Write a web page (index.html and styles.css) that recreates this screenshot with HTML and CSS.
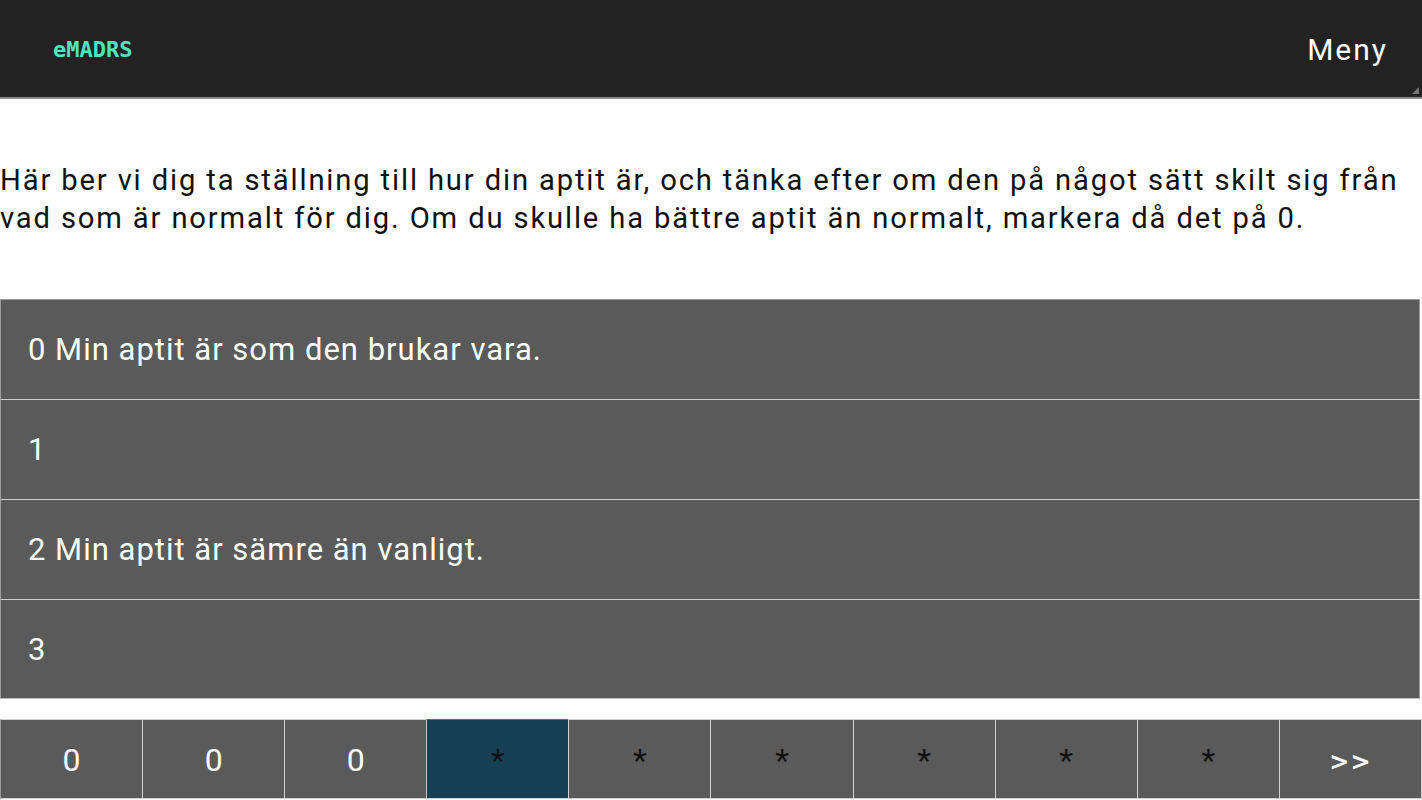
FILE: index.html
```html
<!DOCTYPE html>
<html lang="sv">
<head>
<meta charset="utf-8">
<title>eMADRS</title>
<link rel="stylesheet" href="styles.css">
</head>
<body>
<header class="topbar">
  <div class="logo">eMADRS</div>
  <div class="menu">Meny</div>
  <span class="grip"></span>
</header>
<main class="content">
  <p class="question">Här ber vi dig ta ställning till hur din aptit är, och tänka efter om den på något sätt skilt sig från vad som är normalt för dig. Om du skulle ha bättre aptit än normalt, markera då det på 0.</p>
  <div class="options">
    <div class="option">0 Min aptit är som den brukar vara.</div>
    <div class="option">1</div>
    <div class="option">2 Min aptit är sämre än vanligt.</div>
    <div class="option">3</div>
  </div>
</main>
<nav class="steps">
  <div class="step done">0</div>
  <div class="step done">0</div>
  <div class="step done">0</div>
  <div class="step current">*</div>
  <div class="step">*</div>
  <div class="step">*</div>
  <div class="step">*</div>
  <div class="step">*</div>
  <div class="step">*</div>
  <div class="step next">&gt;&gt;</div>
</nav>
</body>
</html>
```
FILE: styles.css
```css
html, body {
  margin: 0;
  padding: 0;
  background: #ffffff;
  font-family: Roboto, "Liberation Sans", sans-serif;
  width: 1422px;
  height: 800px;
  overflow: hidden;
}
.topbar {
  position: relative;
  height: 97px;
  background: #222222;
  border-bottom: 2px solid #8a8a8a;
  display: flex;
  align-items: center;
  justify-content: space-between;
  padding: 0 36px 0 53px;
  box-sizing: content-box;
}
.logo {
  font-family: "DejaVu Sans Mono", "Liberation Mono", monospace;
  font-weight: 700;
  color: #52e3c1;
  font-size: 22px;
  margin-top: 2px;
}
.menu {
  color: #ffffff;
  font-size: 30px;
  letter-spacing: 2px;
  margin-right: -2px;
  margin-top: 2px;
}
.grip {
  position: absolute;
  right: 3px;
  bottom: 3px;
  width: 0;
  height: 0;
  border-left: 7px solid transparent;
  border-bottom: 7px solid #777777;
}
.content {
  padding-top: 62px;
}
.question {
  margin: 0;
  font-size: 29.2px;
  letter-spacing: 1.85px;
  line-height: 38px;
  color: #111111;
  padding-right: 0;
}
.options {
  margin-top: 62px;
  width: 1420px;
}
.option {
  height: 99px;
  background: #5a5a5a;
  border-top: 1px solid #cfcfcf;
  border-left: 1px solid #9a9a9a;
  border-right: 1px solid #9a9a9a;
  color: #ffffff;
  font-size: 31px;
  letter-spacing: 1px;
  display: flex;
  align-items: center;
  padding-left: 27px;
  box-sizing: content-box;
}
.option:first-child {
  border-top-color: #9a9a9a;
}
.option:last-child {
  border-bottom: 1px solid #bdbdbd;
  height: 98px;
}
.steps {
  margin-top: 20px;
  display: flex;
  height: 80px;
}
.step {
  flex: 1;
  background: #5a5a5a;
  border: 1px solid #d0d0d0;
  margin-left: -1px;
  display: flex;
  align-items: center;
  justify-content: center;
  color: #111111;
  font-size: 32px;
  padding-top: 2px;
}
.step:first-child {
  margin-left: 0;
  border-left-color: #9a9a9a;
}
.step.done, .step.next {
  color: #ffffff;
}
.step.next {
  font-weight: 700;
  font-size: 24px;
  font-family: "DejaVu Sans", Roboto, sans-serif;
  letter-spacing: 1px;
  padding-top: 6px;
}
.step.current {
  background: #174056;
  border-top-color: #2a7fa8;
  border-left-color: #c8c8c8;
}
```
